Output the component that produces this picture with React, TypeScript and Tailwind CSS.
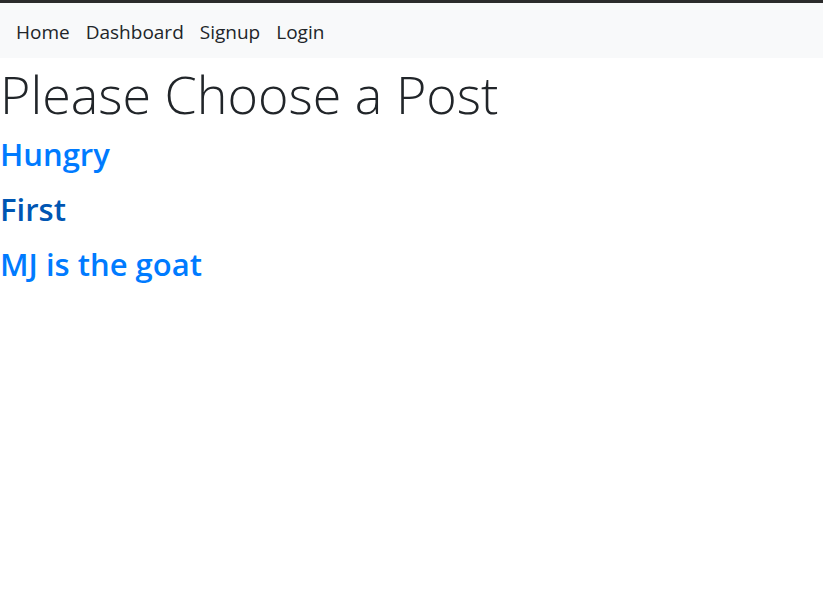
import React from "react";

export default function App() {
  const font = { fontFamily: '"Open Sans", "Noto Sans", sans-serif' };
  return (
    <div className="min-h-[603px] bg-white" style={font}>
      <div className="h-[3px] bg-[#2b2b2b]" />
      <nav className="flex h-[55px] items-center gap-4 bg-[#f8f9fa] px-4 pt-[4px] text-[19px] text-[#212529]">
        <a href="#">Home</a>
        <a href="#">Dashboard</a>
        <a href="#">Signup</a>
        <a href="#">Login</a>
      </nav>
      <h1 className="mt-[5px] text-[52px] font-light leading-[62px] text-[#212529]">Please Choose a Post</h1>
      <div className="mt-[2px] flex flex-col">
        <a href="#" className="h-[55px] text-[31px] font-semibold leading-[55px] text-[#007bff]">Hungry</a>
        <a href="#" className="h-[55px] text-[31px] font-semibold leading-[55px] text-[#0056b3]">First</a>
        <a href="#" className="h-[55px] text-[31px] font-semibold leading-[55px] text-[#007bff]">MJ is the goat</a>
      </div>
    </div>
  );
}
